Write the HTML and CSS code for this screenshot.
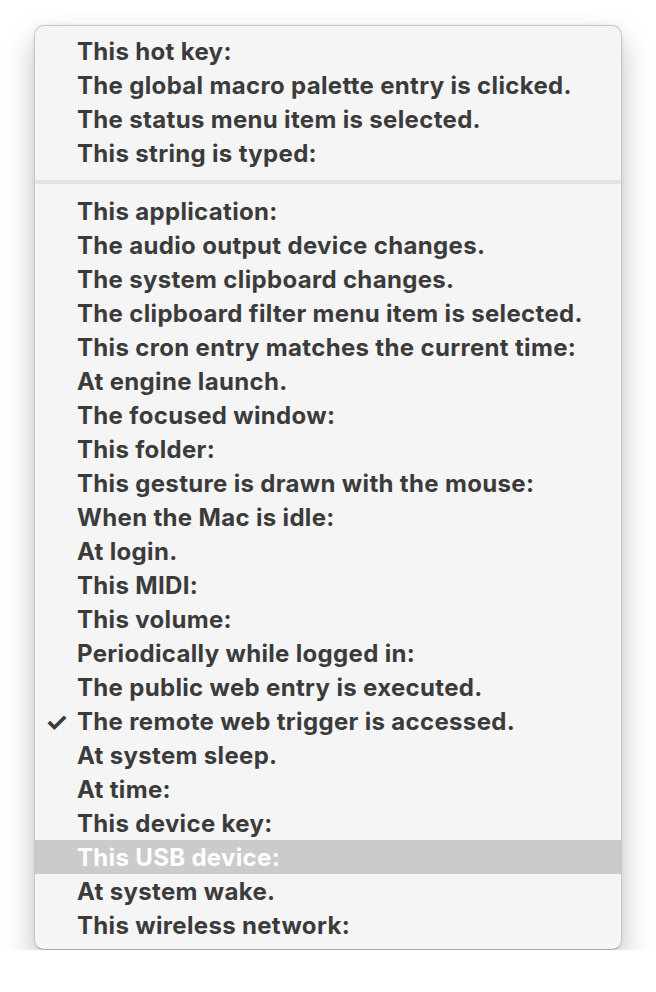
FILE: index.html
```html
<!DOCTYPE html>
<html lang="en">
  <head>
    <meta charset="UTF-8" />
    <meta name="viewport" content="width=device-width, initial-scale=1.0" />
    <title>Trigger menu</title>
    <link rel="stylesheet" href="styles.css">
  </head>
  <body>
    <div class="menu">
      <div class="section">
        <div class="item">This hot key:</div>
        <div class="item">The global macro palette entry is clicked.</div>
        <div class="item">The status menu item is selected.</div>
        <div class="item">This string is typed:</div>
      </div>
      <div class="separator"></div>
      <div class="section">
        <div class="item">This application:</div>
        <div class="item">The audio output device changes.</div>
        <div class="item">The system clipboard changes.</div>
        <div class="item">The clipboard filter menu item is selected.</div>
        <div class="item">This cron entry matches the current time:</div>
        <div class="item">At engine launch.</div>
        <div class="item">The focused window:</div>
        <div class="item">This folder:</div>
        <div class="item">This gesture is drawn with the mouse:</div>
        <div class="item">When the Mac is idle:</div>
        <div class="item">At login.</div>
        <div class="item">This MIDI:</div>
        <div class="item">This volume:</div>
        <div class="item">Periodically while logged in:</div>
        <div class="item">The public web entry is executed.</div>
        <div class="item checked"><span class="check">✓</span>The remote web trigger is accessed.</div>
        <div class="item">At system sleep.</div>
        <div class="item">At time:</div>
        <div class="item">This device key:</div>
        <div class="item selected">This USB device:</div>
        <div class="item">At system wake.</div>
        <div class="item">This wireless network:</div>
      </div>
    </div>
  </body>
</html>
```

FILE: styles.css
```css
body {
  margin: 0;
  background: #ffffff;
  font-family: Inter, "Liberation Sans", sans-serif;
}

.menu {
  margin: 25px 0 0 34px;
  width: 586px;
  background: #f5f5f5;
  border: 1px solid #c6c6c6;
  border-bottom-color: #a8a8a8;
  border-radius: 10px;
  box-shadow: 0 14px 30px rgba(0, 0, 0, 0.25), 0 0 4px rgba(0, 0, 0, 0.06);
  padding: 8px 0 7px;
  overflow: hidden;
}

.separator {
  height: 4px;
  background: #e3e3e3;
  margin: 10px 0;
}

.item {
  position: relative;
  height: 34px;
  line-height: 36px;
  padding-left: 42px;
  font-size: 24px;
  font-weight: 700;
  letter-spacing: 0.33px;
  color: #3b3b3b;
  white-space: nowrap;
  overflow: hidden;
}

.check {
  position: absolute;
  left: 10px;
  font-size: 26px;
  font-weight: 700;
}

.selected {
  background: #cbcbcb;
  color: #ffffff;
}
```
